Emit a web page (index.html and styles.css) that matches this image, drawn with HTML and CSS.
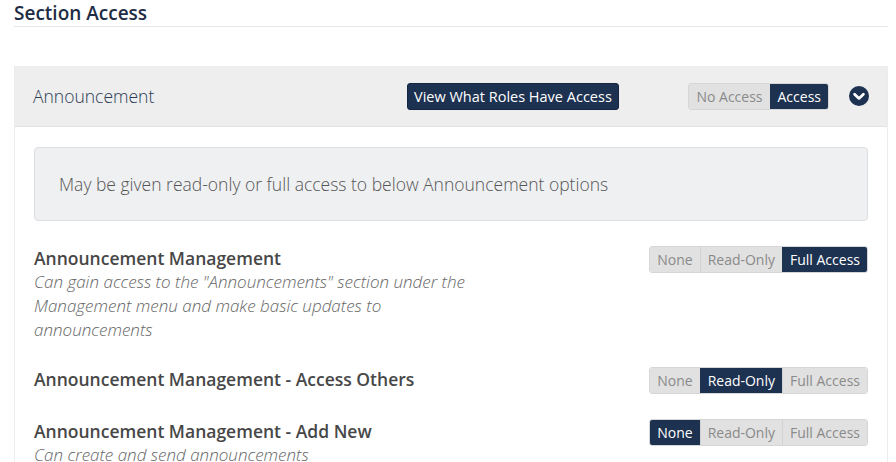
FILE: index.html
```html
<!DOCTYPE html>
<html lang="en">
<head>
    <meta charset="UTF-8" />
    <title>Section Access</title>
    <link rel="stylesheet" href="styles.css">
</head>
<body>

<div class="page">
    <h2 class="section-title">Section Access</h2>

    <div class="panel">
        <div class="panel-header">
            <span class="panel-name">Announcement</span>
            <button class="btn-dark">View What Roles Have Access</button>
            <div class="toggle toggle-header">
                <span class="seg">No Access</span>
                <span class="seg active">Access</span>
            </div>
            <svg class="chevron" width="20" height="20" viewBox="0 0 20 20">
                <circle cx="10" cy="10" r="10" fill="#1d3150"/>
                <path d="M5.6 8.2 L10 12.4 L14.4 8.2" fill="none" stroke="#fff" stroke-width="2.8" stroke-linecap="round" stroke-linejoin="round"/>
            </svg>
        </div>

        <div class="panel-body">
            <div class="info-box">May be given read-only or full access to below Announcement options</div>

            <div class="perm-row">
                <div class="perm-text">
                    <div class="perm-title">Announcement Management</div>
                    <div class="perm-desc">Can gain access to the "Announcements" section under the Management menu and make basic updates to announcements</div>
                </div>
                <div class="toggle">
                    <span class="seg">None</span>
                    <span class="seg">Read-Only</span>
                    <span class="seg active">Full Access</span>
                </div>
            </div>

            <div class="perm-row">
                <div class="perm-text">
                    <div class="perm-title">Announcement Management - Access Others</div>
                </div>
                <div class="toggle">
                    <span class="seg">None</span>
                    <span class="seg active">Read-Only</span>
                    <span class="seg">Full Access</span>
                </div>
            </div>

            <div class="perm-row">
                <div class="perm-text">
                    <div class="perm-title">Announcement Management - Add New</div>
                    <div class="perm-desc">Can create and send announcements</div>
                </div>
                <div class="toggle">
                    <span class="seg active">None</span>
                    <span class="seg">Read-Only</span>
                    <span class="seg">Full Access</span>
                </div>
            </div>
        </div>
    </div>
</div>

</body>
</html>
```

FILE: styles.css
```css
:root {
    --navy: #1d3150;
    --seg-bg: #e1e1e1;
    --seg-text: #8a8a8a;
    --line: #e6e6e6;
}

body {
    margin: 0;
    font-family: 'Open Sans', 'Noto Sans', sans-serif;
    color: #444;
    background: #fff;
}

.page {
    padding: 0 8px 0 14px;
}

.section-title {
    margin: 0;
    font-size: 19px;
    font-weight: 600;
    line-height: 26px;
    color: #1e2d44;
    border-bottom: 1px solid var(--line);
}

.panel {
    margin-top: 39px;
    border: 1px solid #ececec;
    border-top: none;
    border-bottom: none;
}

.panel-header {
    display: flex;
    align-items: center;
    height: 60px;
    padding: 0 18px;
    background: #eeeeee;
    border-bottom: 1px solid #e2e2e2;
}

.panel-name {
    font-size: 17.5px;
    font-weight: 300;
    color: #2b3b55;
    width: 374px;
}

.btn-dark {
    background: var(--navy);
    color: #fff;
    border: 1px solid #152540;
    border-radius: 3px;
    font-family: inherit;
    font-size: 14.5px;
    height: 27px;
    padding: 0 6px;
    cursor: pointer;
}

.toggle {
    display: flex;
    box-sizing: border-box;
    height: 27px;
    border: 1px solid #d6d6d6;
    border-radius: 3px;
    overflow: hidden;
    font-size: 14px;
    flex-shrink: 0;
}

.toggle-header {
    margin-left: auto;
}

.seg {
    display: flex;
    align-items: center;
    padding: 0 7px;
    background: var(--seg-bg);
    color: var(--seg-text);
    border-left: 1px solid #d2d2d2;
}

.seg:first-child {
    border-left: none;
}

.seg.active {
    background: var(--navy);
    color: #fff;
    border-left-color: var(--navy);
}

.chevron {
    margin-left: 20px;
}

.panel-body {
    padding: 20px 19px 0 19px;
}

.info-box {
    background: #eff0f2;
    border: 1px solid #dcdde0;
    border-radius: 4px;
    padding: 24px;
    font-size: 17.5px;
    font-weight: 300;
    line-height: 24px;
    color: #555;
    margin-bottom: 25px;
}

.perm-row {
    display: flex;
    justify-content: space-between;
    align-items: flex-start;
    margin-bottom: 25px;
}

.perm-title {
    font-size: 17.5px;
    font-weight: 600;
    line-height: 24px;
    color: #474747;
}

.perm-desc {
    max-width: 440px;
    font-size: 17px;
    font-weight: 300;
    font-style: italic;
    line-height: 24px;
    color: #666;
}
```
